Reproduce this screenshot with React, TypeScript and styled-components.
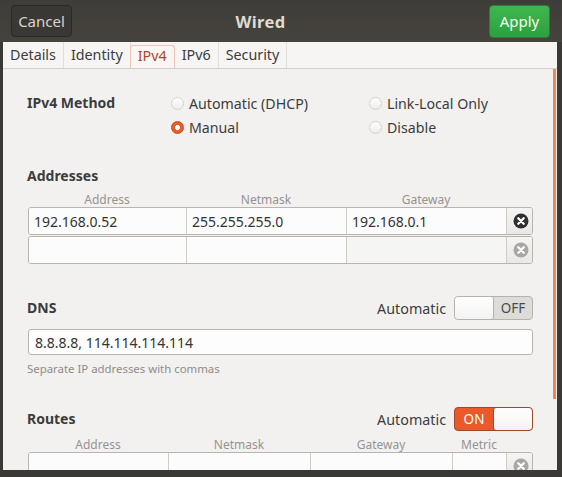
import React from 'react'
import styled, { createGlobalStyle } from 'styled-components'

const GlobalStyle = createGlobalStyle`
    html, body {
        margin: 0;
        padding: 0;
        background: #3b3935;
        overflow: hidden;
    }
    body {
        font-family: "Noto Sans", "DejaVu Sans", sans-serif;
        color: #3c3c3c;
    }
`

const addressCols = ['Address', 'Netmask', 'Gateway'];
const routeCols = ['Address', 'Netmask', 'Gateway', 'Metric'];

function RemoveIcon({ disabled }: { disabled?: boolean }) {
    return (
        <svg width="16" height="16" viewBox="0 0 16 16">
            <circle cx="8" cy="8" r="7.5" fill={disabled ? '#a9a7a4' : '#2f2f2f'} />
            <path d="M5.3 5.3 L10.7 10.7 M10.7 5.3 L5.3 10.7" stroke="#fff" strokeWidth="2.3" strokeLinecap="round" />
        </svg>
    )
}

function Switch({ on }: { on?: boolean }) {
    return (
        <SwitchBox on={on}>
            {on ? <SwitchText on>ON</SwitchText> : <Knob />}
            {on ? <Knob on /> : <SwitchText>OFF</SwitchText>}
        </SwitchBox>
    )
}

export default function App() {
    return (
        <Page>
            <GlobalStyle />
            <Header>
                <HeaderButton>Cancel</HeaderButton>
                <Title>Wired</Title>
                <HeaderButton primary>Apply</HeaderButton>
            </Header>
            <Body>
                <Tabs>
                    <Tab>Details</Tab>
                    <Tab>Identity</Tab>
                    <Tab active>IPv4</Tab>
                    <Tab>IPv6</Tab>
                    <Tab>Security</Tab>
                </Tabs>
                <Content>
                    <MethodGrid>
                        <SectionLabel>IPv4 Method</SectionLabel>
                        <Radio><RadioDot />Automatic (DHCP)</Radio>
                        <Radio><RadioDot />Link-Local Only</Radio>
                        <span />
                        <Radio><RadioDot checked />Manual</Radio>
                        <Radio><RadioDot />Disable</Radio>
                    </MethodGrid>

                    <SectionLabel spaced>Addresses</SectionLabel>
                    <ColHeads cols="158px 160px 160px 27px">
                        {addressCols.map(c => <ColHead key={c}>{c}</ColHead>)}
                    </ColHeads>
                    <EntryRow cols="158px 160px 160px 27px">
                        <Cell>192.168.0.52</Cell>
                        <Cell>255.255.255.0</Cell>
                        <Cell>192.168.0.1</Cell>
                        <RemoveCell><RemoveIcon /></RemoveCell>
                    </EntryRow>
                    <EntryRow cols="158px 160px 160px 27px" gap>
                        <Cell />
                        <Cell />
                        <Cell dim />
                        <RemoveCell><RemoveIcon disabled /></RemoveCell>
                    </EntryRow>

                    <SwitchRow top={32}>
                        <SectionLabel>DNS</SectionLabel>
                        <AutoLabel>Automatic</AutoLabel>
                        <Switch />
                    </SwitchRow>
                    <TextEntry>8.8.8.8, 114.114.114.114</TextEntry>
                    <Hint>Separate IP addresses with commas</Hint>

                    <SwitchRow top={30}>
                        <SectionLabel>Routes</SectionLabel>
                        <AutoLabel>Automatic</AutoLabel>
                        <Switch on />
                    </SwitchRow>
                    <ColHeads cols="140px 142px 142px 54px 27px">
                        {routeCols.map(c => <ColHead key={c}>{c}</ColHead>)}
                    </ColHeads>
                    <EntryRow cols="140px 142px 142px 54px 27px">
                        <Cell />
                        <Cell />
                        <Cell />
                        <Cell />
                        <RemoveCell><RemoveIcon disabled /></RemoveCell>
                    </EntryRow>
                </Content>
                <ScrollThumb />
            </Body>
        </Page>
    )
}

const Page = styled.div`
    width: 562px;
    height: 477px;
    display: flex;
    flex-direction: column;
    padding-bottom: 7px;
    box-sizing: border-box;
`

const Header = styled.div`
    height: 42px;
    flex-shrink: 0;
    display: flex;
    align-items: center;
    padding: 0 12px 0 11px;
    background: linear-gradient(#3f3d39, #46433e);
`

const Title = styled.div`
    flex: 1;
    text-align: center;
    padding-right: 40px;
    font-size: 16.5px;
    font-weight: bold;
    letter-spacing: 0.4px;
    color: #dfdbd2;
`

const HeaderButton = styled.div<{ primary?: boolean }>`
    width: 61px;
    height: 32px;
    box-sizing: border-box;
    display: flex;
    align-items: center;
    justify-content: center;
    border-radius: 4px;
    font-size: 15px;
    ${props => props.primary ? `
        background: linear-gradient(#3fb650, #2ea03f);
        border: 1px solid #24803a;
        color: #f3fff3;
        height: 33px;
    ` : `
        background: #3a3834;
        border: 1px solid #2b2a27;
        color: #d8d4cc;
    `}
`

const Body = styled.div`
    flex: 1;
    margin: 0 5px 0 3px;
    background: #f2f1f0;
    position: relative;
    overflow: hidden;
    display: flex;
    flex-direction: column;
`

const Tabs = styled.div`
    height: 26px;
    flex-shrink: 0;
    display: flex;
    background: #f6f5f4;
    border-bottom: 1px solid #d3cfca;
`

const Tab = styled.div<{ active?: boolean }>`
    display: flex;
    align-items: center;
    padding: 0 7px 1px;
    font-size: 14.3px;
    border-right: 1px solid #e2dfdb;
    ${props => props.active ? `
        margin-top: 3px;
        margin-left: -1px;
        padding-bottom: 4px;
        border: 1px solid #ecc6b6;
        border-bottom: none;
        border-radius: 3px 3px 0 0;
        background: #fbf6f3;
        color: #a9482a;
    ` : `
        color: #3c3c3c;
    `}
`

const Content = styled.div`
    padding: 22px 24px 0 25px;
    display: flex;
    flex-direction: column;
`

const MethodGrid = styled.div`
    display: grid;
    grid-template-columns: 143px 198px 1fr;
    grid-auto-rows: 24px;
    align-items: center;
`

const SectionLabel = styled.div<{ spaced?: boolean }>`
    font-size: 14px;
    font-weight: bold;
    color: #3c3c3c;
    line-height: 20px;
    margin-left: -1px;
    margin-top: ${props => props.spaced ? '27px' : '0'};
`

const Radio = styled.div`
    display: flex;
    align-items: center;
    gap: 5px;
    font-size: 14.2px;
    color: #3c3c3c;
`

const RadioDot = styled.span<{ checked?: boolean }>`
    width: 13px;
    height: 13px;
    box-sizing: border-box;
    border-radius: 50%;
    flex-shrink: 0;
    ${props => props.checked ? `
        background: radial-gradient(circle, #fff 0 2.2px, #e4602f 2.8px);
        border: 1px solid #c14a1d;
    ` : `
        background: linear-gradient(#fdfdfd, #efeeed);
        border: 1px solid #d6d2ce;
    `}
`

const ColHeads = styled.div<{ cols: string }>`
    display: grid;
    grid-template-columns: ${props => props.cols};
    margin-top: 5px;
    height: 16px;
    align-items: center;
`

const ColHead = styled.div`
    text-align: center;
    font-size: 12px;
    color: #969390;
`

const EntryRow = styled.div<{ cols: string; gap?: boolean }>`
    display: grid;
    grid-template-columns: ${props => props.cols};
    height: 28px;
    box-sizing: border-box;
    margin-top: ${props => props.gap ? '1px' : '0'};
    border: 1px solid #b9b4ae;
    border-radius: 3px;
    overflow: hidden;
    flex-shrink: 0;
`

const Cell = styled.div<{ dim?: boolean }>`
    display: flex;
    align-items: center;
    padding-left: 5px;
    font-size: 14px;
    color: #333;
    background: ${props => props.dim ? '#f5f5f4' : '#fcfcfc'};
    border-right: 1px solid #cfcbc6;
`

const RemoveCell = styled.div`
    display: flex;
    align-items: center;
    justify-content: center;
    background: linear-gradient(#f5f4f3, #e9e8e6);
`

const SwitchRow = styled.div<{ top: number }>`
    display: flex;
    align-items: center;
    height: 24px;
    margin-top: ${props => props.top}px;
`

const AutoLabel = styled.div`
    margin-left: auto;
    margin-right: 8px;
    font-size: 14.3px;
    color: #3c3c3c;
`

const SwitchBox = styled.div<{ on?: boolean }>`
    width: 79px;
    height: 24px;
    box-sizing: border-box;
    display: flex;
    border-radius: 4px;
    overflow: hidden;
    border: 1px solid ${props => props.on ? '#9b4a2c' : '#b7b1ab'};
    background: ${props => props.on ? '#e9592a' : '#dedcd8'};
`

const SwitchText = styled.div<{ on?: boolean }>`
    flex: 1;
    display: flex;
    align-items: center;
    justify-content: center;
    font-size: 13.5px;
    color: ${props => props.on ? '#fff' : '#4a4a4a'};
`

const Knob = styled.div<{ on?: boolean }>`
    width: 39px;
    box-sizing: border-box;
    background: linear-gradient(#ffffff, #f4f3f2);
    border-radius: 3px;
    border-${props => props.on ? 'left' : 'right'}: 1px solid ${props => props.on ? '#9b4a2c' : '#b7b1ab'};
`

const TextEntry = styled.div`
    height: 26px;
    box-sizing: border-box;
    margin-top: 9px;
    display: flex;
    align-items: center;
    padding-left: 6px;
    font-size: 14px;
    color: #333;
    background: #fdfdfd;
    border: 1px solid #b9b4ae;
    border-radius: 3px;
`

const Hint = styled.div`
    margin-top: 6px;
    margin-left: -1px;
    height: 16px;
    line-height: 16px;
    font-size: 11.4px;
    color: #8f8c88;
`

const ScrollThumb = styled.div`
    position: absolute;
    right: 1px;
    top: 27px;
    width: 3px;
    height: 330px;
    background: #ec8558;
`
